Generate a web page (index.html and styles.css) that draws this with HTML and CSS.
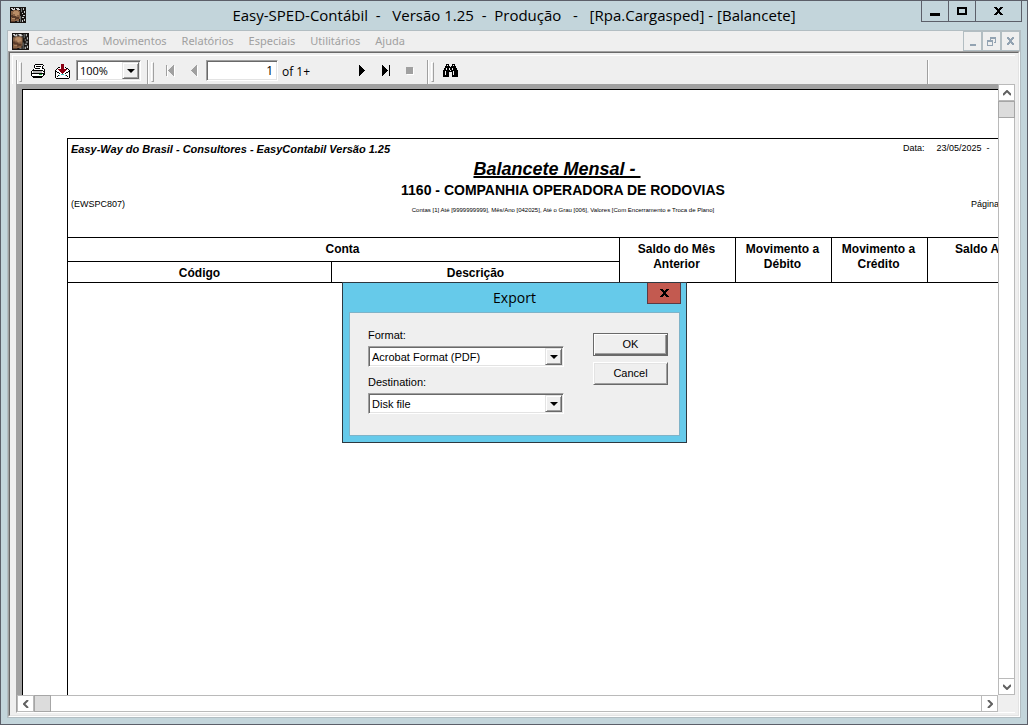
FILE: index.html
```html
<!DOCTYPE html>
<html lang="pt-BR">
<head>
<meta charset="utf-8">
<title>Easy-SPED-Contábil</title>
<link rel="stylesheet" href="styles.css">
</head>
<body>
<svg class="defs" aria-hidden="true">
  <symbol id="app" viewBox="0 0 16 16">
    <path fill="#171412" d="M0 0h16v16H0z"/>
    <path fill="#8a6447" d="M1 4h2V3h6v1h1v8H9v2H1z"/>
    <path fill="#b98d66" d="M4 4h4v1h1v3H7v1H5V7H3V5h1zM2 10h3v2H2z"/>
    <path fill="#5a3a28" d="M1 8h2v1h3v1h3v2H6v1H5v-2H2v-1H1zM1 14h4v1H1z"/>
    <path fill="#d8d8d8" d="M1 1h2v1H1zM4 1h1v1H4zM6 1h3v1h1v1H7V2H6zM2 2h3v1H2z"/>
    <path fill="#6d7271" d="M10 9h1v6h-1zM7 14h2v1H7zM11 1h1v4h-1z"/>
    <path fill="#c6cac9" d="M13 1h1v2h-1zM14 4h1v2h-1zM12 6h1v1h-1zM13 8h2v1h-2zM12 10h2v1h-2zM14 12h1v2h-1zM12 13h1v2h-1z"/>
  </symbol>
</svg>
<div class="window">
  <header class="titlebar">
    <svg class="app-icon" width="16" height="16"><use href="#app"/></svg>
    <h1 class="title">Easy-SPED-Contábil  -   Versão 1.25  -  Produção   -   [Rpa.Cargasped] - [Balancete]</h1>
    <div class="window-buttons">
      <button class="wb" aria-label="Minimizar"><svg width="10" height="10" viewBox="0 0 10 10"><path d="M0 7h10v3H0z"/></svg></button>
      <button class="wb" aria-label="Maximizar"><svg width="10" height="10" viewBox="0 0 10 10"><path fill-rule="evenodd" d="M0 1h10v8H0zM2 3v4h6V3z"/></svg></button>
      <button class="wb wb-close" aria-label="Fechar"><svg width="9" height="8" viewBox="0 0 9 8"><path d="M0 0h3v1h1v1h1V1h1V0h3v1H8v1H7v1H6v2h1v1h1v1h1v1H6V7H5V6H4v1H3v1H0V7h1V6h1V5h1V3H2V2H1V1H0z"/></svg></button>
    </div>
  </header>
  <div class="client">
    <nav class="menubar">
      <svg class="menu-icon" width="17" height="17"><use href="#app"/></svg>
      <button class="menu">Cadastros</button>
      <button class="menu">Movimentos</button>
      <button class="menu">Relatórios</button>
      <button class="menu">Especiais</button>
      <button class="menu">Utilitários</button>
      <button class="menu">Ajuda</button>
      <div class="mdi-buttons">
        <button class="mdi" aria-label="Minimizar janela"><svg width="9" height="9" viewBox="0 0 9 9"><path d="M2 7h6v2H2z"/></svg></button>
        <button class="mdi" aria-label="Restaurar janela"><svg width="9" height="9" viewBox="0 0 9 9"><path fill-rule="evenodd" d="M3 0h6v6H7V5h1V2H4v1H3zM0 3h6v6H0zM1 5v3h4V5z"/></svg></button>
        <button class="mdi" aria-label="Fechar janela"><svg width="9" height="8" viewBox="0 0 9 8"><path d="M1 0h2v1h1v1h1V1h1V0h2v2H7v1H6v2h1v1h1v2H6V7H5V6H4v1H3v1H1V6h1V5h1V3H2V2H1z"/></svg></button>
      </div>
    </nav>
    <main class="workspace">
      <div class="child">
        <div class="toolbar">
          <div class="band band-file">
            <span class="grip"></span>
            <button class="tool" aria-label="Imprimir">
              <svg width="16" height="16" viewBox="0 0 16 16"><path fill="#fff" d="M5 2h8v4h2v6h-2v2H2v-2H1V8l2-2h1z"/><path d="M5 1h8v1H5zM4 2h1v3H4zM13 2h1v1h-1zM12 3h1v3h-1zM6 3h5v1H6zM5 5h5v1H5zM3 6h1v1H3zM2 7h11v1H2zM13 5h1v1h-1zM14 6h1v6h-1zM1 8h1v5H1zM2 10h12v1H2zM2 13h11v1H2zM3 14h9v1H3zM13 11h1v2h-1zM13 8h1v1h-1z"/><path fill="#b5b5b5" d="M3 8h9v2H3z"/><path fill="#18a52f" d="M9 11h3v1H9z"/></svg>
            </button>
            <button class="tool" aria-label="Exportar">
              <svg width="16" height="16" viewBox="0 0 16 16"><path fill="#fff" d="M2 7l5-3h3l5 3v8H2z"/><path fill="#38c6c6" d="M3 13h2v-1h2v-1h3v1h2v1h2v1H3z"/><path fill="#fff" d="M6 12h5v1h2v1H4v-1h2z"/><path d="M4 4h2v1H4zM3 5h1v1H3zM2 6h1v1H2zM1 7h1v8H1zM11 4h1v1h-1zM12 5h2v1h-2zM14 6h1v1h-1zM15 7h1v8h-1zM2 15h13v1H2zM2 8h1v1H2zM3 9h2v1H3zM5 10h1v1H5zM14 8h1v1h-1zM12 9h2v1h-2zM11 10h1v1h-1zM4 12h1v1H4zM3 13h1v1H3zM12 12h1v1h-1zM13 13h1v1h-1z"/><path fill="#8b0012" d="M7 1h3v5h3v1h-1v1h-1v1h-1v1H9v1H8v-1H7V9H6V8H5V7H4V6h3z"/></svg>
            </button>
            <span class="combo combo-zoom"><select aria-label="Zoom"><option>100%</option></select><span class="drop"></span></span>
          </div>
          <div class="band band-nav">
            <span class="grip"></span>
            <button class="tool tool-off" aria-label="Primeira página"><svg width="9" height="12" viewBox="0 0 9 12"><path fill="#fff" d="M1 1h1v11H1zM8 1h1v11H8z"/><path d="M0 0h1v11H0zM7 0h1v11H7V10H6V9H5V8H4V7H3V6H2V5h1V4h1V3h1V2h1V1h1z"/></svg></button>
            <button class="tool tool-off" aria-label="Página anterior"><svg width="7" height="12" viewBox="0 0 7 12"><path fill="#fff" d="M6 1h1v11H6z"/><path d="M5 0h1v11H5V10H4V9H3V8H2V7H1V6H0V5h1V4h1V3h1V2h1V1h1z"/></svg></button>
            <input class="page-input" type="text" value="1" aria-label="Página">
            <span class="page-count">of 1+</span>
            <button class="tool" aria-label="Próxima página"><svg width="6" height="11" viewBox="0 0 6 11"><path d="M0 0h1v1h1v1h1v1h1v1h1v1h1v1H5v1H4v1H3v1H2v1H1v1H0z"/></svg></button>
            <button class="tool" aria-label="Última página"><svg width="8" height="11" viewBox="0 0 8 11"><path d="M0 0h1v1h1v1h1v1h1v1h1v1h1v1H5v1H4v1H3v1H2v1H1v1H0zM7 0h1v11H7z"/></svg></button>
            <button class="tool tool-off" aria-label="Parar"><svg width="8" height="8" viewBox="0 0 8 8"><path fill="#fff" d="M1 1h7v7H1z"/><path d="M0 0h7v7H0z"/></svg></button>
          </div>
          <div class="band band-find">
            <span class="grip"></span>
            <button class="tool" aria-label="Localizar"><svg width="15" height="13" viewBox="0 0 15 13"><path d="M3 0h3v2h1v1h1V2h1V0h3v2h1v2h1v2h1v7H9V8H6v5H0V6h1V4h1V2h1z"/><path fill="#efefef" d="M4 1h1v1H4zM10 1h1v1h-1zM3 4h1v2H3zM6 4h1v2H6zM9 4h1v2H9zM2 7h1v4H2zM10 7h1v4h-1zM7 6h1v1H7z"/></svg></button>
          </div>
          <div class="band band-rest"></div>
        </div>
        <div class="viewer">
          <div class="canvas">
            <div class="paper">
              <article class="report">
                <header class="report-head">
                  <p class="vendor">Easy-Way do Brasil - Consultores - EasyContabil Versão 1.25</p>
                  <p class="date"><span>Data:</span><span>23/05/2025 &nbsp;-</span></p>
                  <h2 class="report-title">Balancete Mensal -&nbsp;</h2>
                  <h3 class="company">1160 - COMPANHIA OPERADORA DE RODOVIAS</h3>
                  <p class="code">(EWSPC807)</p>
                  <p class="filters">Contas [1] Até [9999999999], Mês/Ano [042025], Até o Grau [006], Valores [Com Encerramento e Troca de Plano]</p>
                  <p class="page-label">Página</p>
                </header>
                <table class="accounts">
                  <colgroup><col class="c-code"><col class="c-desc"><col class="c-prev"><col class="c-mov"><col class="c-mov"><col></colgroup>
                  <thead>
                    <tr><th colspan="2">Conta</th><th rowspan="2">Saldo do Mês Anterior</th><th rowspan="2">Movimento a Débito</th><th rowspan="2">Movimento a Crédito</th><th rowspan="2" class="last">Saldo A</th></tr>
                    <tr><th>Código</th><th>Descrição</th></tr>
                  </thead>
                </table>
              </article>
            </div>
          </div>
          <div class="scroll scroll-v">
            <button class="sb" aria-label="Rolar para cima"><svg width="8" height="6" viewBox="0 0 8 6"><path d="M0 5l4-4 4 4"/></svg></button>
            <span class="thumb"></span>
            <span class="track"></span>
            <button class="sb" aria-label="Rolar para baixo"><svg width="8" height="6" viewBox="0 0 8 6"><path d="M0 1l4 4 4-4"/></svg></button>
          </div>
          <div class="scroll scroll-h">
            <button class="sb" aria-label="Rolar para a esquerda"><svg width="6" height="8" viewBox="0 0 6 8"><path d="M5 0L1 4l4 4"/></svg></button>
            <span class="thumb"></span>
            <span class="track"></span>
            <button class="sb" aria-label="Rolar para a direita"><svg width="6" height="8" viewBox="0 0 6 8"><path d="M1 0l4 4-4 4"/></svg></button>
          </div>
        </div>
      </div>
    </main>
  </div>
  <section class="dialog" role="dialog" aria-labelledby="dialog-title">
    <header class="dialog-bar">
      <h2 class="dialog-title" id="dialog-title">Export</h2>
      <button class="dialog-close" aria-label="Fechar"><svg width="9" height="8" viewBox="0 0 9 8"><path d="M0 0h3v1h1v1h1V1h1V0h3v1H8v1H7v1H6v2h1v1h1v1h1v1H6V7H5V6H4v1H3v1H0V7h1V6h1V5h1V3H2V2H1V1H0z"/></svg></button>
    </header>
    <form class="dialog-body">
      <div class="fields">
        <label for="format">Format:</label>
        <span class="combo"><select id="format"><option>Acrobat Format (PDF)</option></select><span class="drop"></span></span>
        <label for="destination">Destination:</label>
        <span class="combo"><select id="destination"><option>Disk file</option></select><span class="drop"></span></span>
      </div>
      <div class="actions">
        <button type="button" class="action action-default">OK</button>
        <button type="button" class="action">Cancel</button>
      </div>
    </form>
  </section>
</div>
</body>
</html>
```
FILE: styles.css
```css
* { box-sizing: border-box; }
body { margin: 0; font: 12px/16px "Liberation Sans", Arial, sans-serif; color: #000; }
h1, h2, h3, p { margin: 0; font-weight: normal; }
button, input, select { font: inherit; color: inherit; margin: 0; padding: 0; border: 0; border-radius: 0; background: none; }
button { display: flex; align-items: center; justify-content: center; }
svg { display: block; flex: none; }
.defs { position: absolute; width: 0; height: 0; }

.window { position: relative; display: flex; flex-direction: column; height: 100vh; padding: 0 6px 6px; border: 1px solid #5c5f69; background: #c3d5db; overflow: hidden; }

.titlebar { flex: none; display: grid; grid-template-columns: 1fr auto 1fr; height: 29px; }
.app-icon { margin: 6px 0 0 3px; }
.title { font: 15px/29px "Open Sans", "Noto Sans", sans-serif; white-space: pre; }
.window-buttons { display: flex; justify-self: end; height: 21px; margin-right: -1px; border: 1px solid #5c5f69; border-top: 0; }
.wb { width: 27px; border-right: 1px solid #5c5f69; }
.wb-close { width: 45px; border-right: 0; }

.client { flex: 1; min-height: 0; display: flex; flex-direction: column; border: 1px solid #b2bdc2; background: #efefef; }
.menubar { flex: none; display: flex; align-items: center; height: 20px; padding-left: 4px; }
.menu-icon { margin-right: 7px; }
.menu { margin-right: 15px; color: #a0a0a0; font: 11px/18px "Noto Sans", sans-serif; }
.mdi-buttons { display: flex; margin-left: auto; align-self: stretch; }
.mdi { width: 19px; border: 1px solid #b2bdc2; fill: #93a3b2; }

.workspace { flex: 1; min-height: 0; display: flex; border: 1px solid; border-color: #a0a0a0 #fff #fff #a0a0a0; }
.child { flex: 1; min-width: 0; display: flex; flex-direction: column; padding: 2px 3px 2px 2px; border: 1px solid; border-color: #696969 #e3e3e3 #e3e3e3 #696969; }
.toolbar { flex: none; display: flex; height: 29px; padding: 4px 0 0 3px; border-top: 1px solid #fff; border-left: 1px solid #fff; }
.band { flex: none; display: flex; padding-left: 3px; border-left: 1px solid #a0a0a0; box-shadow: inset 1px 0 #fff; }
.band-file { width: 131px; padding-left: 2px; }
.band-nav { width: 280px; }
.band-find { width: 500px; }
.band-rest { flex: 1; }
.grip { width: 3px; height: 20px; margin: 2px 4px 0 0; border: 1px solid; border-color: #fff #a0a0a0 #a0a0a0 #fff; }
.tool { width: 24px; height: 21px; }
.tool-off { fill: #a0a0a0; }
.combo { display: flex; height: 21px; border: 1px solid; border-color: #a0a0a0 #fff #fff #a0a0a0; box-shadow: inset 1px 1px #696969, inset -1px -1px #e3e3e3; padding: 1px; background: #fff; }
.combo select { flex: 1; min-width: 0; appearance: none; outline: 0; padding-left: 2px; }
.combo-zoom { width: 65px; margin-left: 2px; font-family: "Open Sans", sans-serif; font-size: 11px; }
.drop { display: grid; place-items: center; width: 17px; background: #efefef; border: 1px solid; border-color: #e3e3e3 #696969 #696969 #e3e3e3; box-shadow: inset 1px 1px #fff, inset -1px -1px #a0a0a0; }
.drop::after { content: ""; border: solid transparent; border-width: 4px 4px 0; border-top-color: #000; }
.page-input { width: 72px; height: 21px; padding: 0 4px; text-align: right; border: 1px solid; border-color: #a0a0a0 #fff #fff #a0a0a0; box-shadow: inset 1px 1px #696969, inset -1px -1px #e3e3e3; background: #fff; font-family: "Open Sans", sans-serif; }
.page-count { width: 72px; padding-left: 4px; line-height: 23px; font-family: "Open Sans", sans-serif; }

.viewer { flex: 1; min-height: 0; display: grid; grid-template: minmax(0, 1fr) 17px / minmax(0, 1fr) 17px; margin-left: 4px; border-left: 1px solid #a0a0a0; border-bottom: 1px solid #fff; }
.canvas { display: flex; padding: 5px 0 0 5px; background: #a0a0a0; overflow: hidden; }
.paper { flex: 1; min-width: 0; display: flex; padding: 48px 0 0 44px; border-top: 1px solid #000; border-left: 1px solid #000; background: #fff; overflow: hidden; }
.report { flex: none; width: 991px; border-top: 1px solid #000; border-left: 1px solid #000; }
.report-head { display: grid; grid-template: 20px 20px 22px 17px / 1fr auto 1fr; height: 98px; font-size: 9px; line-height: 12px; }
.vendor { grid-area: 1 / 1; padding: 4px 0 0 3px; font-weight: bold; font-style: italic; font-size: 11px; white-space: nowrap; }
.date { grid-area: 1 / 3; display: flex; gap: 12px; padding: 3px 0 0 178px; white-space: nowrap; }
.report-title { grid-area: 2 / 2; justify-self: center; padding-right: 12px; font: italic bold 18px/20px "Liberation Sans", sans-serif; text-decoration: underline; text-decoration-thickness: 2px; }
.company { grid-area: 3 / 2; font: bold 14px/23px "Liberation Sans", sans-serif; white-space: nowrap; }
.code { grid-area: 3 / 1 / 5 / 2; padding: 19px 0 0 3px; }
.filters { grid-area: 4 / 2; justify-self: center; padding-top: 3px; font-size: 6px; white-space: nowrap; }
.page-label { grid-area: 3 / 3 / 5 / 4; padding: 19px 0 0 246px; }
.accounts { width: 100%; table-layout: fixed; border-collapse: separate; border-spacing: 0; border-top: 1px solid #000; }
.accounts th { height: 24px; padding: 4px 10px 0 8px; vertical-align: top; font: bold 12px/15px "Liberation Sans", sans-serif; border-right: 1px solid #000; border-bottom: 1px solid #000; }
.accounts tr + tr th { height: 21px; padding: 4px 8px 0; line-height: 14px; }
.accounts .last { text-align: left; padding-left: 27px; }
.c-code { width: 264px; }
.c-desc { width: 288px; }
.c-prev { width: 116px; }
.c-mov { width: 96px; }

.scroll { display: flex; background: #fff; border: 1px solid #bababa; }
.scroll-v { flex-direction: column; }
.sb { flex: none; width: 15px; height: 15px; }
.scroll-v .sb { height: 16px; border-bottom: 1px solid #bababa; }
.scroll-h .sb { width: 16px; border-right: 1px solid #bababa; }
.scroll-v .sb:last-child { border-width: 1px 0 0; border-top: 1px solid #bababa; }
.scroll-h .sb:last-child { border-width: 0 0 0 1px; border-left: 1px solid #bababa; }
.sb path { fill: none; stroke: #606060; stroke-width: 2; }
.thumb { flex: none; width: 17px; height: 17px; background: #dcdcdc; border: 1px solid #a6a6a6; }
.scroll-v .thumb { margin-left: -1px; }
.scroll-h .thumb { margin-top: -1px; }
.track { flex: 1; }

.dialog { position: absolute; left: 341px; top: 281px; width: 345px; padding: 0 6px 6px; border: 1px solid #2d3840; background: #66caea; font-size: 11px; }
.dialog-bar { display: grid; grid-template-columns: 1fr auto 1fr; height: 29px; }
.dialog-title { grid-column: 2; font: 14px/29px "Open Sans", "Noto Sans", sans-serif; }
.dialog-close { justify-self: end; width: 34px; height: 21px; margin-right: -1px; background: #c35a50; border: 1px solid #5b3a44; border-top: 0; }
.dialog-body { display: flex; gap: 29px; height: 124px; padding: 14px 0 0 18px; border: 1px solid #7fb3c8; background: #efefef; }
.fields { display: flex; flex-direction: column; width: 196px; }
.fields .combo { margin: 3px 0 7px; }
.actions { display: flex; flex-direction: column; gap: 6px; width: 75px; padding-top: 6px; }
.action { height: 23px; padding-bottom: 2px; background: #efefef; border: 1px solid; border-color: #fff #696969 #696969 #fff; box-shadow: inset 1px 1px #e3e3e3, inset -1px -1px #a0a0a0; }
.action-default { border-color: #696969; box-shadow: inset 1px 1px #fff, inset -1px -1px #696969, inset -2px -2px #a0a0a0; }
```
